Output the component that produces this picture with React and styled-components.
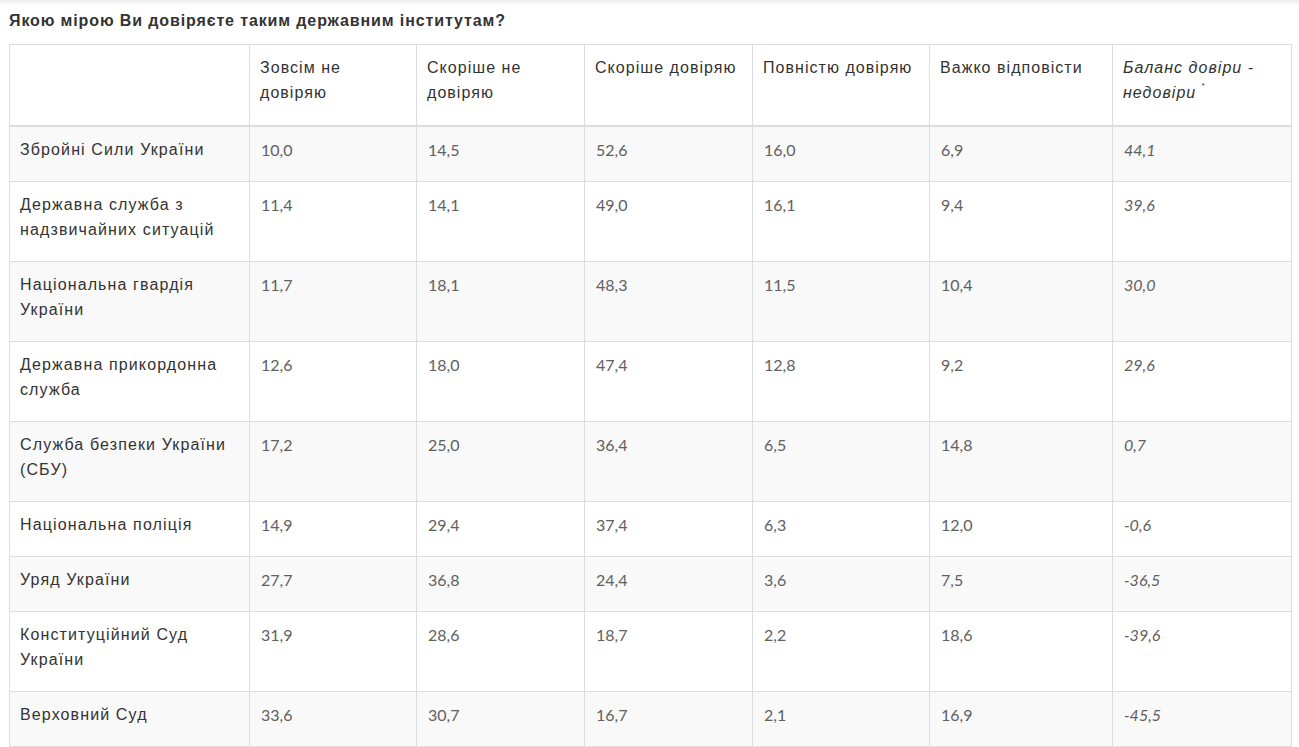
import React from "react";
import styled, { createGlobalStyle } from "styled-components";

const Global = createGlobalStyle`
  html, body { margin: 0; padding: 0; background: #fff; }
  body { font-family: "Liberation Sans", Arial, sans-serif; color: #333; }
`;

const Page = styled.div`
  display: flex;
  flex-direction: column;
`;

const Shade = styled.div`
  height: 5px;
  background: linear-gradient(#ececec, #ffffff);
`;

const Title = styled.h3`
  margin: 5px 0 0 9px;
  font-size: 16px;
  line-height: 22px;
  font-weight: bold;
  letter-spacing: 0.055em;
  color: #333;
`;

const Table = styled.table`
  margin: 12px 0 0 9px;
  width: 1282px;
  border-collapse: collapse;
  table-layout: fixed;
  font-size: 16px;
  line-height: 25px;
`;

const HeadCell = styled.th`
  text-align: left;
  vertical-align: top;
  font-weight: normal;
  letter-spacing: 0.065em;
  font-style: ${(p) => (p.$italic ? "italic" : "normal")};
  color: #333;
  padding: 10px 10px 20px 10px;
  border: 1px solid #dddddd;
  border-bottom: 2px solid #dddddd;
`;

const HeadLine = styled.span`
  display: block;
`;

const Row = styled.tr`
  background: ${(p) => (p.$stripe ? "#f9f9f9" : "#ffffff")};
`;

const Label = styled.td`
  vertical-align: top;
  color: #333;
  letter-spacing: 0.07em;
  padding: 10px 10px 19px 10px;
  border: 1px solid #dddddd;
`;

const Value = styled.td`
  vertical-align: top;
  color: #606060;
  font-family: Lato, "Liberation Sans", sans-serif;
  font-style: ${(p) => (p.$italic ? "italic" : "normal")};
  padding: 10px 10px 19px 11px;
  border: 1px solid #dddddd;
`;

const Mark = styled.span`
  display: inline-block;
  vertical-align: top;
  font-size: 8px;
  line-height: 12px;
  margin-left: 5px;
`;

const widths = [240, 167, 168, 168, 177, 183, 179];

const heads = [
  "",
  "Зовсім не довіряю",
  "Скоріше не довіряю",
  "Скоріше довіряю",
  "Повністю довіряю",
  "Важко відповісти",
];

const rows = [
  ["Збройні Сили України", "10,0", "14,5", "52,6", "16,0", "6,9", "44,1"],
  ["Державна служба з надзвичайних ситуацій", "11,4", "14,1", "49,0", "16,1", "9,4", "39,6"],
  ["Національна гвардія України", "11,7", "18,1", "48,3", "11,5", "10,4", "30,0"],
  ["Державна прикордонна служба", "12,6", "18,0", "47,4", "12,8", "9,2", "29,6"],
  ["Служба безпеки України (СБУ)", "17,2", "25,0", "36,4", "6,5", "14,8", "0,7"],
  ["Національна поліція", "14,9", "29,4", "37,4", "6,3", "12,0", "-0,6"],
  ["Уряд України", "27,7", "36,8", "24,4", "3,6", "7,5", "-36,5"],
  ["Конституційний Суд України", "31,9", "28,6", "18,7", "2,2", "18,6", "-39,6"],
  ["Верховний Суд", "33,6", "30,7", "16,7", "2,1", "16,9", "-45,5"],
];

export default function App() {
  return (
    <Page>
      <Global />
      <Shade />
      <Title>Якою мірою Ви довіряєте таким державним інститутам?</Title>
      <Table>
        <colgroup>
          {widths.map((w, i) => (
            <col key={i} style={{ width: w }} />
          ))}
        </colgroup>
        <thead>
          <tr>
            {heads.map((h, i) => (
              <HeadCell key={i}>{h}</HeadCell>
            ))}
            <HeadCell $italic>
              <HeadLine>Баланс довіри -</HeadLine>
              <HeadLine>
                недовіри<Mark>*</Mark>
              </HeadLine>
            </HeadCell>
          </tr>
        </thead>
        <tbody>
          {rows.map((r, i) => (
            <Row key={i} $stripe={i % 2 === 0}>
              <Label>{r[0]}</Label>
              {r.slice(1).map((v, j) => (
                <Value key={j} $italic={j === 5}>
                  {v}
                </Value>
              ))}
            </Row>
          ))}
        </tbody>
      </Table>
    </Page>
  );
}
